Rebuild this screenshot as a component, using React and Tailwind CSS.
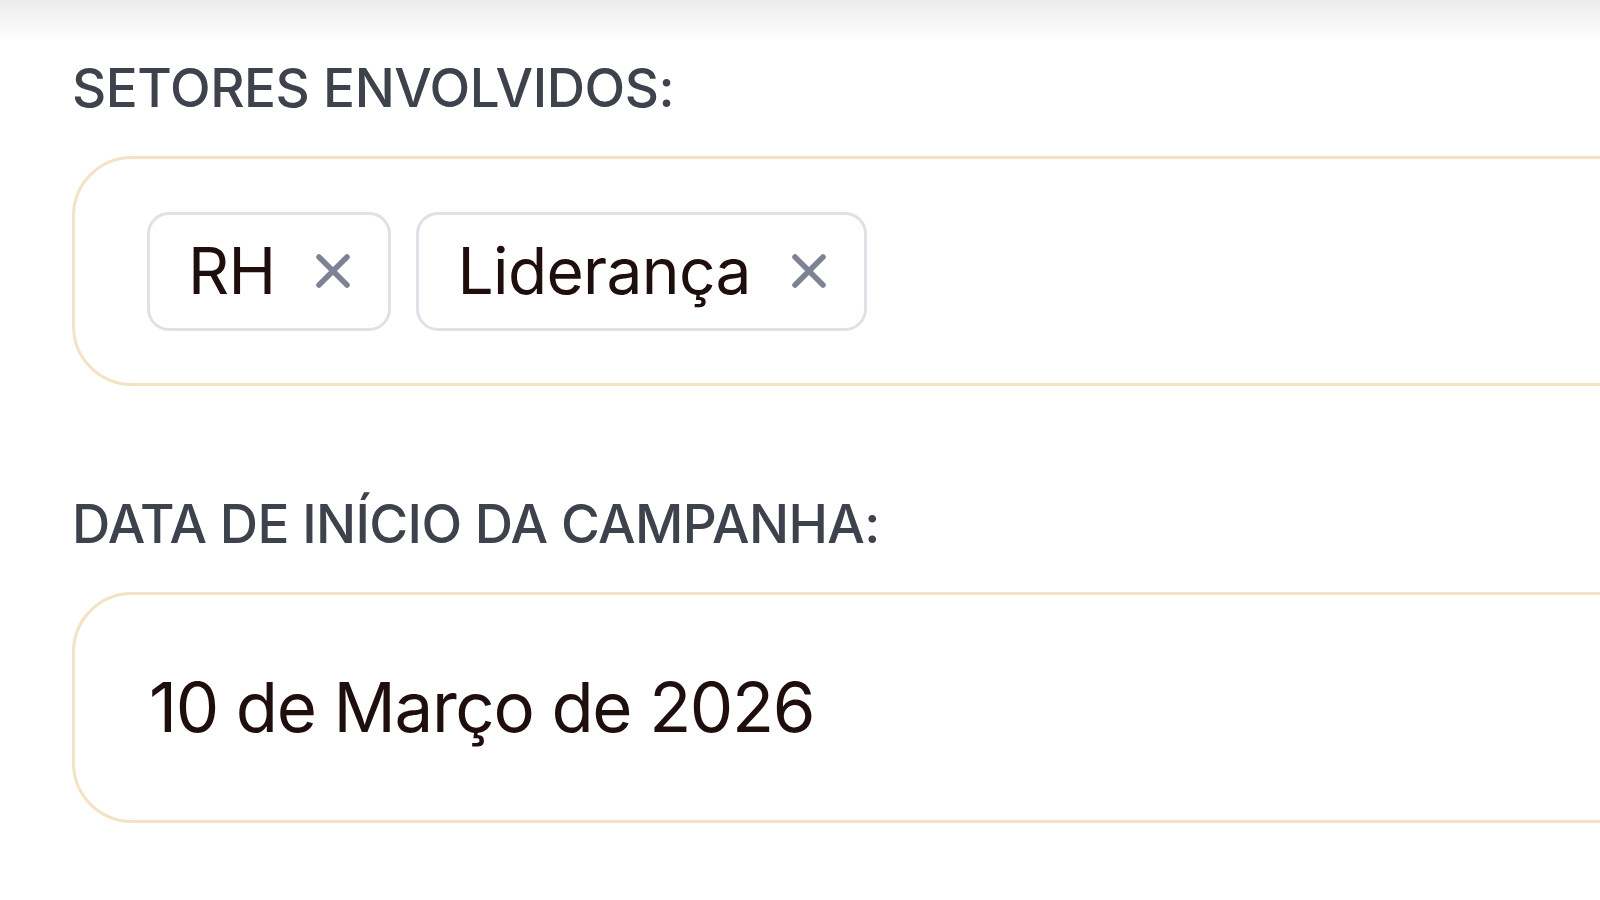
function CloseIcon() {
  return (
    <svg width="36" height="36" viewBox="0 0 36 36" fill="none" stroke="#7d8394" strokeWidth="5.5" strokeLinecap="round">
      <path d="M4 4 L32 32 M32 4 L4 32" />
    </svg>
  );
}

function Tag({ label }) {
  return (
    <div className="flex items-center h-[119px] rounded-[22px] border-[3.5px] border-[#e0e1e8] bg-white pl-[38px] pr-[37px] gap-[40px]">
      <span className="text-[64px] leading-none text-[#1f0e0e] tracking-[-0.01em]">{label}</span>
      <CloseIcon />
    </div>
  );
}

export default function App() {
  return (
    <div className="w-[1600px] h-[900px] overflow-hidden bg-white font-['Inter',_sans-serif]">
      <div className="h-[42px] bg-gradient-to-b from-[#ececec] to-white" />
      <div className="pl-[72px]">
        <label className="block mt-[20px] text-[53px] leading-none font-medium text-[#3e424d] tracking-[-0.008em]">
          SETORES ENVOLVIDOS:
        </label>
        <div className="mt-[41px] w-[1600px] h-[230px] rounded-[60px] border-[3.5px] border-[#f3e2c4] flex items-center gap-[25px] pl-[72px]">
          <Tag label="RH" />
          <Tag label="Liderança" />
        </div>
        <label className="block mt-[112px] text-[53px] leading-none font-medium text-[#3e424d] tracking-[-0.012em]">
          DATA DE INÍCIO DA CAMPANHA:
        </label>
        <div className="mt-[41px] w-[1600px] h-[231px] rounded-[60px] border-[3.5px] border-[#f3e2c4] flex items-center pl-[74px]">
          <span className="text-[69px] leading-none text-[#1f0e0e] tracking-[-0.02em]">10 de Março de 2026</span>
        </div>
      </div>
    </div>
  );
}
